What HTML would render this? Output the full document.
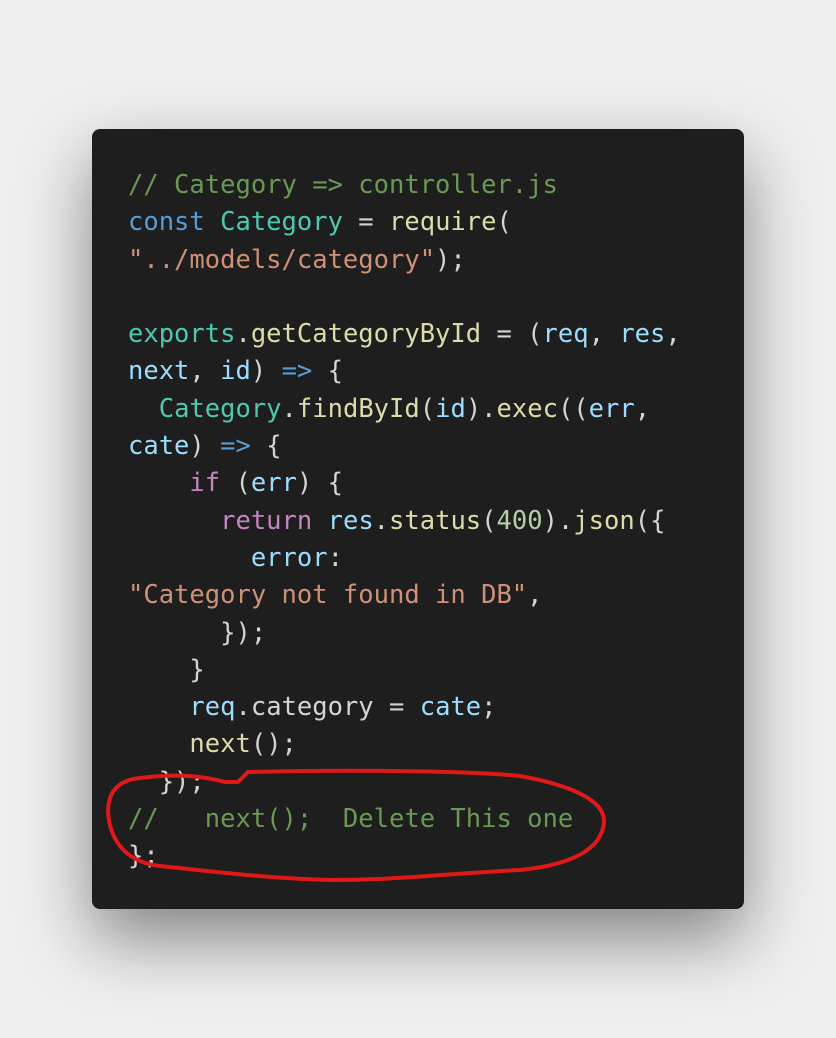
<!DOCTYPE html>
<html><head><style>
body{margin:0;width:836px;height:1038px;background:#efefef;overflow:hidden;position:relative}
.card{position:absolute;left:92px;top:129px;width:652px;height:780px;background:#1e1e1e;border-radius:8px;box-shadow:0 30px 70px rgba(0,0,0,0.45)}
pre{position:absolute;left:128px;top:167px;margin:0;font-family:"DejaVu Sans Mono",monospace;font-size:25.5px;line-height:37.3px;color:#d4d4d4;white-space:pre}
.c{color:#6a9955}.k{color:#569cd6}.t{color:#4ec9b0}.f{color:#dcdcaa}.s{color:#ce9178}.v{color:#9cdcfe}.p{color:#c586c0}.n{color:#b5cea8}
svg{position:absolute;left:0;top:0}
</style></head><body>
<div class="card"></div>
<pre><span class="c">// Category =&gt; controller.js</span>
<span class="k">const</span> <span class="t">Category</span> = <span class="f">require</span>(
<span class="s">"../models/category"</span>);

<span class="t">exports</span>.<span class="f">getCategoryById</span> = (<span class="v">req</span>, <span class="v">res</span>,
<span class="v">next</span>, <span class="v">id</span>) <span class="k">=&gt;</span> {
  <span class="t">Category</span>.<span class="f">findById</span>(<span class="v">id</span>).<span class="f">exec</span>((<span class="v">err</span>,
<span class="v">cate</span>) <span class="k">=&gt;</span> {
    <span class="p">if</span> (<span class="v">err</span>) {
      <span class="p">return</span> <span class="v">res</span>.<span class="f">status</span>(<span class="n">400</span>).<span class="f">json</span>({
        <span class="v">error</span>:
<span class="s">"Category not found in DB"</span>,
      });
    }
    <span class="v">req</span>.category = <span class="v">cate</span>;
    <span class="f">next</span>();
  });
<span class="c">//   next();  Delete This one</span>
};</pre>
<svg width="836" height="1038"><path d="M238 782 L248 772 C330 770 460 770 520 776 C570 785 605 800 604 822 C602 850 570 865 520 870 C440 874 400 880 330 880 C260 878 200 870 160 866 C125 862 110 840 108 812 C108 790 120 780 140 778 C170 774 200 775 225 782 Z" fill="none" stroke="#e01818" stroke-width="4" stroke-linejoin="round"/></svg>
</body></html>
